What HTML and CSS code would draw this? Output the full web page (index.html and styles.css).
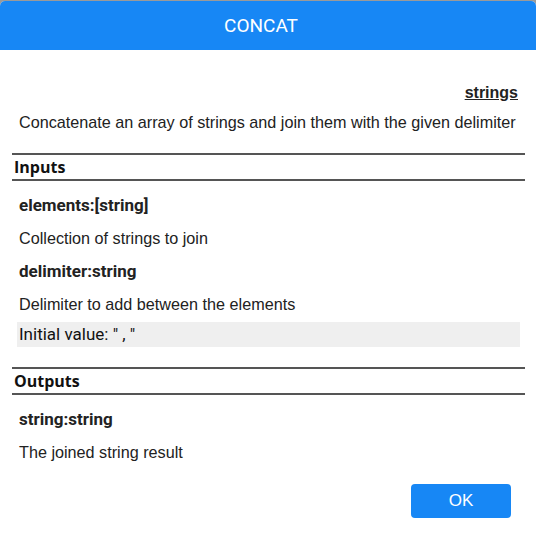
FILE: index.html
```html
<!DOCTYPE html>
<html>
<head>
<meta charset="utf-8">
<link rel="stylesheet" href="styles.css">
</head>
<body>
<div class="dialog">
  <div class="header">CONCAT</div>
  <div class="content">
    <div class="category"><span>strings</span></div>
    <p class="desc">Concatenate an array of strings and join them with the given delimiter</p>
    <div class="section">Inputs</div>
    <div class="label first">elements:[string]</div>
    <p class="text">Collection of strings to join</p>
    <div class="label">delimiter:string</div>
    <p class="text">Delimiter to add between the elements</p>
    <div class="initial">Initial value: " , "</div>
    <div class="section outputs">Outputs</div>
    <div class="label first">string:string</div>
    <p class="text">The joined string result</p>
    <div class="actions"><button class="ok">OK</button></div>
  </div>
</div>
</body>
</html>
```
FILE: styles.css
```css
html { background: #9a9a9a; }
body { margin: 0; }
.dialog {
  margin-top: 1px;
  background: #fff;
  border-radius: 5px 5px 0 0;
  height: 541px;
  overflow: hidden;
  font-family: "Liberation Sans", Arial, sans-serif;
  color: #222;
}
.header {
  height: 49px;
  line-height: 49px;
  background: #1787f5;
  color: #fff;
  text-align: center;
  padding-right: 14px;
  font-family: Roboto, sans-serif;
  font-size: 19px;
}
.content {
  padding: 0 11px 0 12px;
}
.category {
  margin-top: 33px;
  text-align: right;
  padding-right: 7px;
  font-weight: bold;
  font-size: 16px;
  line-height: 20px;
}
.category span { text-decoration: underline; }
.desc {
  margin: 9px 0 0;
  padding-left: 7px;
  font-size: 16.2px;
  line-height: 20px;
}
.section {
  margin-top: 21px;
  border-top: 2px solid #555;
  border-bottom: 2px solid #555;
  height: 24px;
  line-height: 24px;
  padding-left: 2px;
  font-family: "Open Sans", sans-serif;
  font-weight: bold;
  font-size: 16px;
  color: #111;
}
.section.outputs { margin-top: 20px; }
.label {
  margin-top: 13px;
  padding-left: 7px;
  font-family: Roboto, sans-serif;
  font-weight: bold;
  font-size: 17px;
  line-height: 20px;
}
.label.first { margin-top: 14px; }
.text {
  margin: 13px 0 0;
  padding-left: 7px;
  font-size: 16.2px;
  line-height: 20px;
}
.initial {
  margin: 8px 5px 0 5px;
  height: 25px;
  line-height: 25px;
  padding-left: 2px;
  background: #efefef;
  font-family: Roboto, sans-serif;
  font-size: 17px;
  color: #111;
}
.actions {
  display: flex;
  justify-content: flex-end;
  margin-top: 22px;
  padding-right: 14px;
}
.ok {
  width: 100px;
  height: 34px;
  border: none;
  border-radius: 4px;
  background: #1787f5;
  color: #fff;
  font-family: "Liberation Sans", Arial, sans-serif;
  font-size: 17px;
}
```
